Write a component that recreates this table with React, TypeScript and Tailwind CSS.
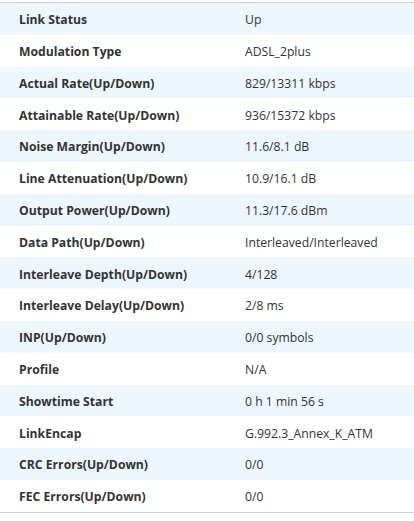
const rows: [string, string][] = [
  ['Link Status', 'Up'],
  ['Modulation Type', 'ADSL_2plus'],
  ['Actual Rate(Up/Down)', '829/13311 kbps'],
  ['Attainable Rate(Up/Down)', '936/15372 kbps'],
  ['Noise Margin(Up/Down)', '11.6/8.1 dB'],
  ['Line Attenuation(Up/Down)', '10.9/16.1 dB'],
  ['Output Power(Up/Down)', '11.3/17.6 dBm'],
  ['Data Path(Up/Down)', 'Interleaved/Interleaved'],
  ['Interleave Depth(Up/Down)', '4/128'],
  ['Interleave Delay(Up/Down)', '2/8 ms'],
  ['INP(Up/Down)', '0/0 symbols'],
  ['Profile', 'N/A'],
  ['Showtime Start', '0 h 1 min 56 s'],
  ['LinkEncap', 'G.992.3_Annex_K_ATM'],
  ['CRC Errors(Up/Down)', '0/0'],
  ['FEC Errors(Up/Down)', '0/0'],
]

export default function App() {
  return (
    <div className="w-[414px] bg-white pt-[2px] text-[12.2px] text-[#333] font-['Open_Sans',sans-serif]">
      <div className="border-y border-[#d4d4d4]">
        {rows.map(([label, value], i) => (
          <div
            key={label}
            className={`flex h-[31.8px] items-center pt-[3px] ${i % 2 === 0 ? 'bg-[#eef6fe]' : 'bg-white'}`}
          >
            <div className="w-[245px] pl-[19px] font-bold">{label}</div>
            <div>{value}</div>
          </div>
        ))}
      </div>
    </div>
  )
}
